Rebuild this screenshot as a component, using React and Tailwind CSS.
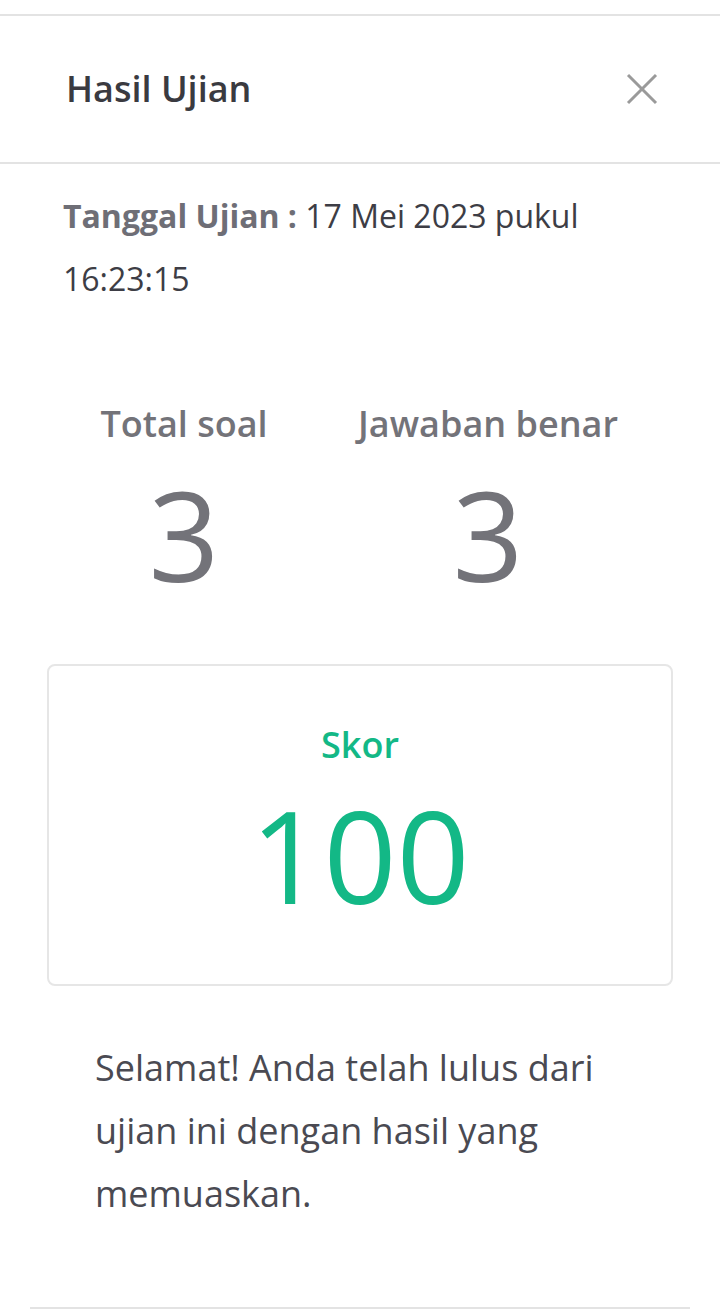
export default function App() {
  return (
    <div className="w-[720px] h-[1315px] bg-white overflow-hidden" style={{ fontFamily: '"Open Sans", sans-serif' }}>
      <div className="h-[14px]" />
      <header className="h-[150px] border-t-2 border-b-2 border-[#e3e3e3] flex items-center justify-between pl-[66px] pr-[62px]">
        <h1 className="text-[36px] font-semibold text-[#3a3a40]">Hasil Ujian</h1>
        <button className="text-[#9a9a9a]">
          <svg width="32" height="32" viewBox="0 0 32 32" fill="none" stroke="currentColor" strokeWidth="3">
            <line x1="2" y1="2" x2="30" y2="30" />
            <line x1="30" y1="2" x2="2" y2="30" />
          </svg>
        </button>
      </header>

      <p className="pl-[63px] pr-[60px] pt-[20px] text-[32px] leading-[63px] text-[#3d3d45]">
        <span className="font-bold text-[#6e6e76]">Tanggal Ujian : </span>17 Mei 2023 pukul 16:23:15
      </p>

      <div className="grid grid-cols-2 w-[608px] ml-[32px] mt-[96px] text-[#737379]">
        <div className="flex flex-col items-center">
          <span className="text-[36px] font-semibold leading-none">Total soal</span>
          <span className="text-[124px] leading-none mt-[30px]">3</span>
        </div>
        <div className="flex flex-col items-center">
          <span className="text-[36px] font-semibold leading-none">Jawaban benar</span>
          <span className="text-[124px] leading-none mt-[30px]">3</span>
        </div>
      </div>

      <div className="mx-[47px] mt-[68px] h-[322px] border-2 border-[#e6e6e6] rounded-lg flex flex-col items-center pt-[61px] text-[#13b886]">
        <span className="text-[36px] font-semibold leading-none">Skor</span>
        <span className="text-[128px] leading-none mt-[28px]">100</span>
      </div>

      <p className="pl-[95px] pr-[100px] mt-[50px] text-[36px] leading-[63px] text-[#4a4a52]">
        Selamat! Anda telah lulus dari ujian ini dengan hasil yang memuaskan.
      </p>

      <div className="mx-[30px] mt-[82px] border-t-2 border-[#e3e3e3]" />
    </div>
  );
}
